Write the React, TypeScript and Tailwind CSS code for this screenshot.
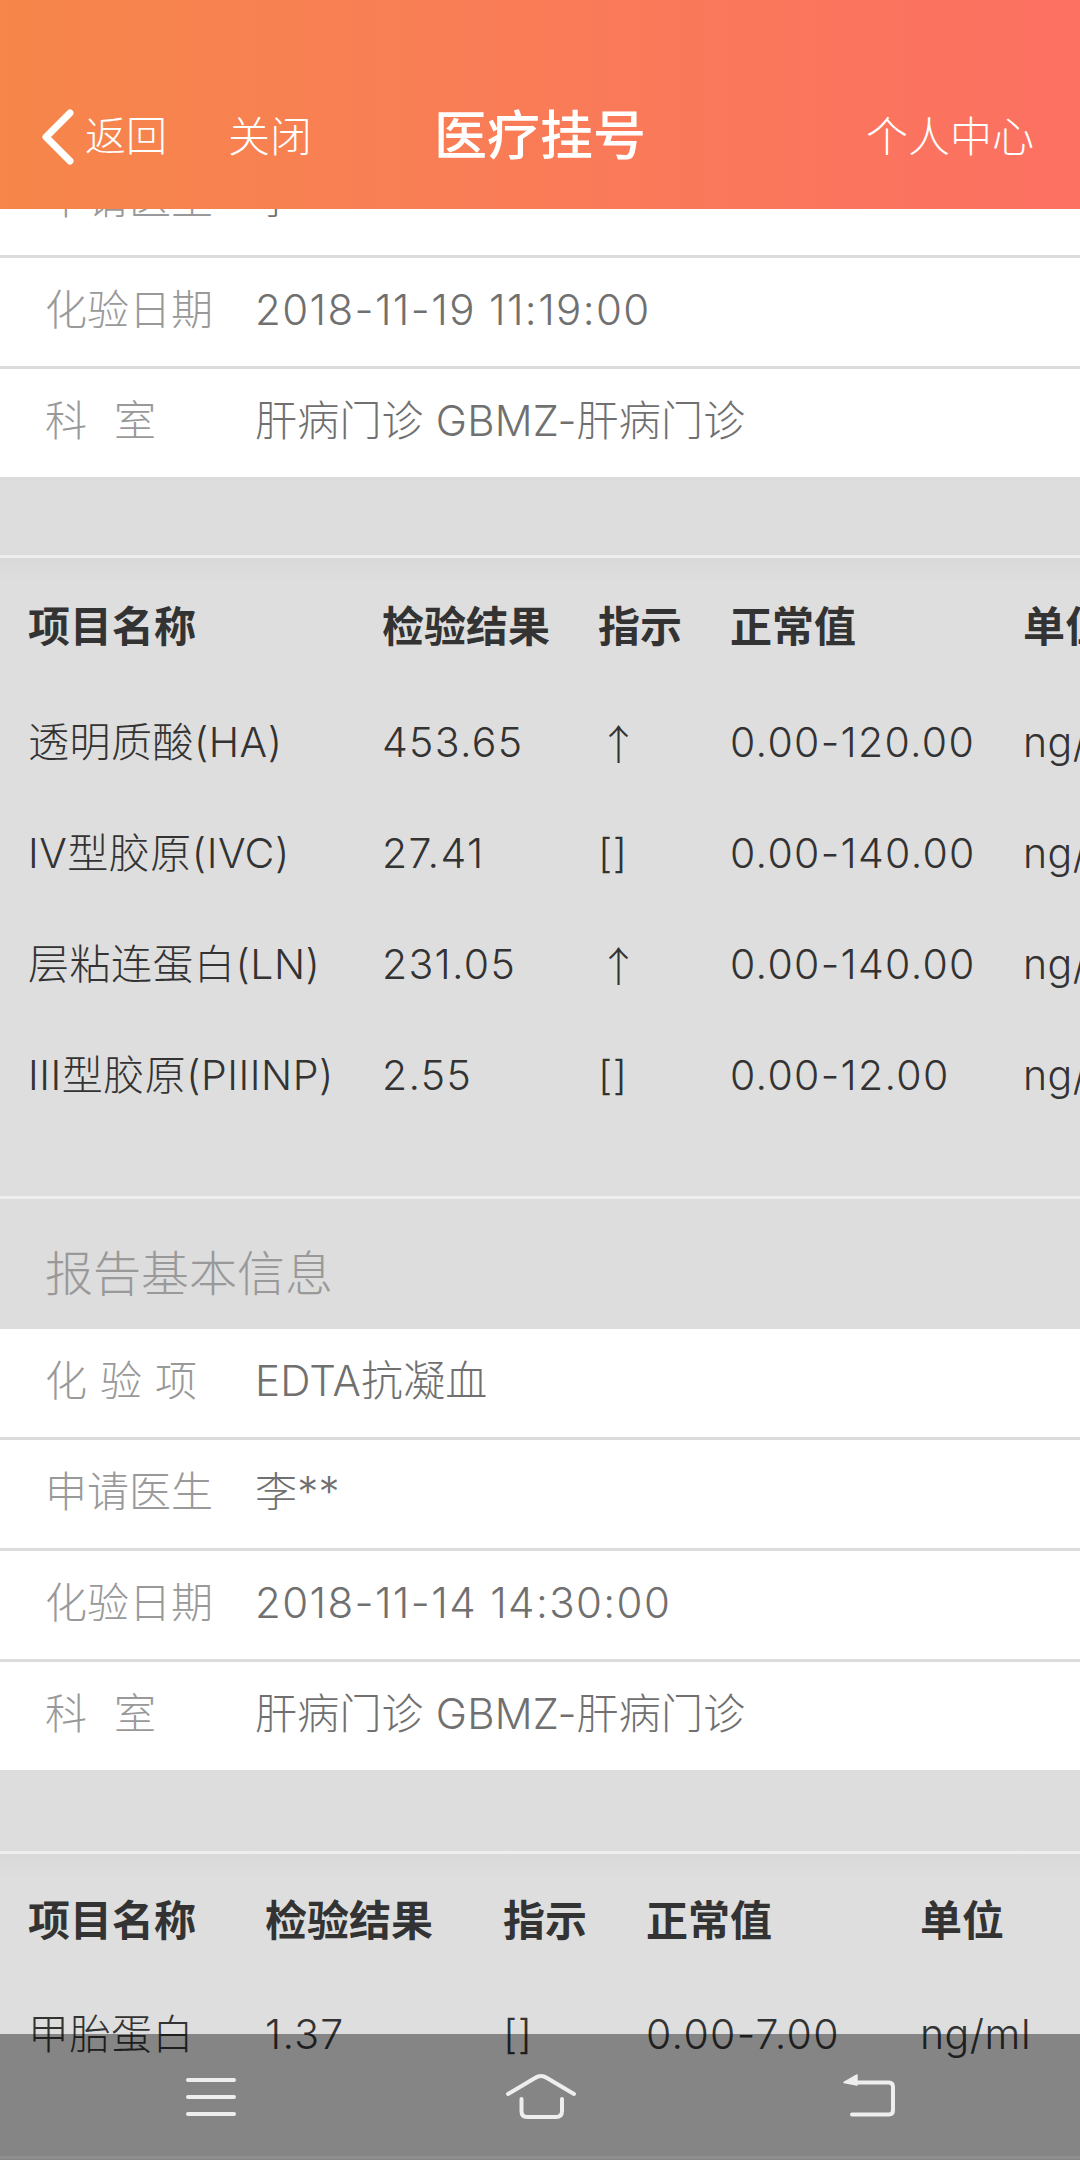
const font = "[font-family:Inter,'Noto_Sans_CJK_SC',sans-serif]";

type Row = { label: string; value: string; spacing?: string; numeric?: boolean };

const rowsA: Row[] = [
  { label: "申请医生", value: "李**" },
  { label: "化验日期", value: "2018-11-19 11:19:00", numeric: true },
  { label: "科室", value: "肝病门诊 GBMZ-肝病门诊", spacing: "tracking-[27px]" },
];
const rowsB: Row[] = [
  { label: "化验项", value: "EDTA抗凝血", spacing: "tracking-[13px]" },
  { label: "申请医生", value: "李**" },
  { label: "化验日期", value: "2018-11-14 14:30:00", numeric: true },
  { label: "科室", value: "肝病门诊 GBMZ-肝病门诊", spacing: "tracking-[27px]" },
];

const tableA = [
  ["透明质酸(HA)", "453.65", "↑", "0.00-120.00", "ng/ml"],
  ["IV型胶原(IVC)", "27.41", "[]", "0.00-140.00", "ng/ml"],
  ["层粘连蛋白(LN)", "231.05", "↑", "0.00-140.00", "ng/ml"],
  ["III型胶原(PIIINP)", "2.55", "[]", "0.00-12.00", "ng/ml"],
];
const tableB = [["甲胎蛋白", "1.37", "[]", "0.00-7.00", "ng/ml"]];
const heads = ["项目名称", "检验结果", "指示", "正常值", "单位"];

function cellClass(c: string) {
  if (c === "↑") return "whitespace-nowrap [font-family:'Noto_Sans_CJK_SC',sans-serif]";
  if (/^[0-9.-]+$/.test(c)) return "whitespace-nowrap tracking-[1.3px]";
  return "whitespace-nowrap tracking-[0.5px]";
}

function InfoRows({ rows }: { rows: Row[] }) {
  return (
    <div className="bg-white">
      {rows.map((r) => (
        <div key={r.label} className="flex h-[111px] items-center border-b-[3px] border-[#dcdcdc] pb-[5px] pl-[45px]">
          <span className={`w-[210px] text-[42px] font-light text-[#999999] ${r.spacing ?? ""}`}>{r.label}</span>
          <span className={r.numeric ? "text-[42px] font-light tracking-[1.4px] text-[#707070]" : "text-[42px] font-light tracking-[0.2px] text-[#707070]"}>{r.value}</span>
        </div>
      ))}
    </div>
  );
}

function LabTable({ columns, rows, outer, headH }: { columns: string; rows: string[][]; outer: string; headH: string }) {
  return (
    <div className={`border-t-[3px] border-[#eeeeee] bg-[linear-gradient(#d9d9d9,#dedede_24px)] pl-[28px] ${outer}`}>
      <div className={`grid items-center pt-[6px] text-[42px] font-bold text-[#333333] ${headH} ${columns}`}>
        {heads.map((h) => (
          <span key={h} className="whitespace-nowrap">{h}</span>
        ))}
      </div>
      {rows.map((row) => (
        <div key={row[0]} className={`grid h-[111px] items-center pb-[2px] text-[41px] font-light text-[#333333] ${columns}`}>
          {row.map((c, i) => (
            <span key={i} className={cellClass(c)}>{c}</span>
          ))}
        </div>
      ))}
    </div>
  );
}

export default function App() {
  return (
    <div className={`relative h-[2160px] w-[1080px] overflow-hidden bg-[#dddddd] ${font}`}>
      <header className="relative z-10 grid h-[209px] grid-cols-[1fr_auto_1fr] items-center bg-gradient-to-r from-[#f6864a] to-[#fc7062] pt-[64px] text-white">
        <div className="flex items-center pl-[40px]">
          <svg width="36" height="56" viewBox="0 0 36 56" fill="none" className="mr-[9px]">
            <path d="M30 4 L6 28 L30 52" stroke="#fff" strokeWidth="7" strokeLinecap="round" strokeLinejoin="round" />
          </svg>
          <span className="text-[41px] font-light">返回</span>
          <span className="ml-[61px] text-[42px] font-light">关闭</span>
        </div>
        <div className="text-[53px] font-medium">医疗挂号</div>
        <div className="pr-[46px] text-right text-[42px] font-light">个人中心</div>
      </header>

      <main className="-mt-[62px]">
        <InfoRows rows={rowsA} />
        <div className="h-[75px]" />
        <LabTable columns="grid-cols-[354px_216px_132px_293px_200px]" rows={tableA} outer="pb-[64px]" headH="h-[130px]" />
        <div className="flex h-[133px] items-center border-t-[3px] border-[#eeeeee] pl-[45px] pt-[20px] text-[48px] font-light text-[#999999]">
          报告基本信息
        </div>
        <InfoRows rows={rowsB} />
        <div className="h-[78px]" />
        <LabTable columns="grid-cols-[237px_238px_143px_274px_150px]" rows={tableB} outer="border-b-[3px] border-b-[#eeeeee] pb-[65px]" headH="h-[126px]" />
      </main>

      <nav className="absolute inset-x-0 bottom-0 h-[126px] bg-black/40">
        <svg width="1080" height="126" viewBox="0 0 1080 126" fill="none" stroke="#eeeeee" strokeWidth="4" strokeLinecap="round" strokeLinejoin="round">
          <path d="M188 46H234M188 63H234M188 80H234" />
          <path d="M508 60L535 44Q541 40 547 44L574 60" />
          <path d="M521.5 65V77Q521.5 83 527 83H556Q562 83 562 77V65" />
          <path d="M855 48.5H889Q893 48.5 893 53V76Q893 80.5 889 80.5H852" />
          <path d="M857 41L844 48.5L857 51Z" fill="#eeeeee" strokeWidth="1.5" />
        </svg>
      </nav>
    </div>
  );
}
